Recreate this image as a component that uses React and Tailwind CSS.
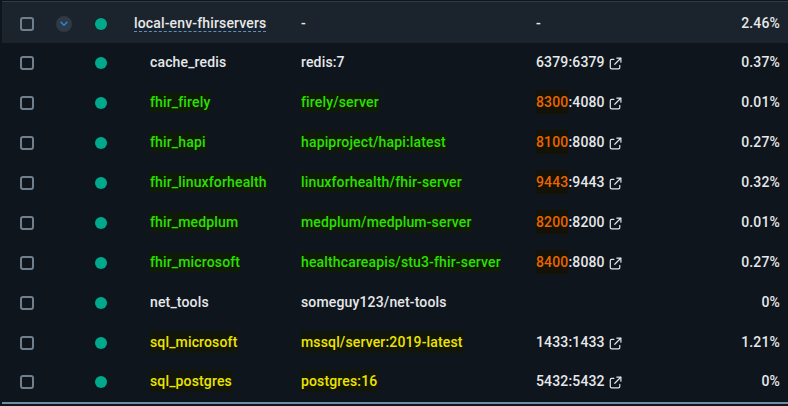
import React from "react";

const G = "text-[#2ae000]";
const Y = "text-[#ece400]";
const GH = "bg-[#0f1a08] py-[2px]";
const YH = "bg-[#12150a] py-[3px]";

const rows = [
  { name: "cache_redis", image: "redis:7", a: "6379", b: "6379", cpu: "0.37%" },
  { name: "fhir_firely", image: "firely/server", a: "8300", b: "4080", cpu: "0.01%", c: "g", hot: true },
  { name: "fhir_hapi", image: "hapiproject/hapi:latest", a: "8100", b: "8080", cpu: "0.27%", c: "g", hot: true },
  { name: "fhir_linuxforhealth", image: "linuxforhealth/fhir-server", a: "9443", b: "9443", cpu: "0.32%", c: "g", hot: true },
  { name: "fhir_medplum", image: "medplum/medplum-server", a: "8200", b: "8200", cpu: "0.01%", c: "g", hot: true },
  { name: "fhir_microsoft", image: "healthcareapis/stu3-fhir-server", a: "8400", b: "8080", cpu: "0.27%", c: "g", hot: true },
  { name: "net_tools", image: "someguy123/net-tools", cpu: "0%" },
  { name: "sql_microsoft", image: "mssql/server:2019-latest", a: "1433", b: "1433", cpu: "1.21%", c: "y" },
  { name: "sql_postgres", image: "postgres:16", a: "5432", b: "5432", cpu: "0%", c: "y", last: true },
];

function Check() {
  return <span className="block w-[14px] h-[14px] rounded-[3px] border-2 border-[#6f7f8e] ml-[20px] mt-[2px] shrink-0" />;
}

function Dot() {
  return <span className="block w-[12px] h-[12px] rounded-full bg-[#00a88c] mt-[2px]" />;
}

function External() {
  return (
    <svg width="13" height="13" viewBox="0 0 14 14" fill="none" stroke="#e4e6e9" strokeWidth="1.3" strokeLinecap="round" strokeLinejoin="round" className="ml-[4px] mt-[2px] shrink-0">
      <path d="M5.2 2.6H2.8A1.4 1.4 0 0 0 1.4 4v7.4a1.4 1.4 0 0 0 1.4 1.4h7.4a1.4 1.4 0 0 0 1.4-1.4V9" />
      <path d="M8.4 1.2h4.4v4.4" />
      <path d="M12.6 1.4 6.2 7.8" />
    </svg>
  );
}

function Tinted({ c, children }) {
  if (!c) return <span className="text-[#e6e8ea]">{children}</span>;
  return <span className={c === "g" ? `${G} ${GH}` : `${Y} ${YH}`}>{children}</span>;
}

function Row({ r }) {
  return (
    <div className={r.last ? "flex items-center h-10 pb-[2px]" : "flex items-center h-10"}>
      <div className="w-[52px] flex items-center"><Check /></div>
      <div className="w-[24px]" />
      <div className="w-[74px] flex items-center pl-[19px]"><Dot /></div>
      <div className="w-[151px] whitespace-nowrap"><Tinted c={r.c}>{r.name}</Tinted></div>
      <div className="w-[235px] whitespace-nowrap"><Tinted c={r.c}>{r.image}</Tinted></div>
      <div className="w-[160px] flex items-center whitespace-nowrap text-[#e6e8ea]">
        {r.a && (
          <>
            <span className={r.hot ? "text-[#e86600] bg-[#141206] py-[2px]" : ""}>{r.a}</span>
            <span>:{r.b}</span>
            <External />
          </>
        )}
      </div>
      <div className="flex-1 text-right pr-2 text-[#e6e8ea]">{r.cpu}</div>
    </div>
  );
}

export default function App() {
  return (
    <div className="w-[788px] h-[406px] overflow-hidden bg-[#0f151d] text-[14px] leading-5 font-medium tracking-[0.15px] font-['Roboto',sans-serif]">
      <div className="pt-[1px]">
        <div className="ml-[2px] h-[1px] bg-[#2c3b47]" />
        <div className="ml-[2px] flex items-center h-[41px] bg-[#1b242c]">
          <div className="w-[50px] flex items-center -ml-[2px]"><Check /></div>
          <div className="w-[24px] flex items-center ml-[6px]">
            <span className="w-4 h-4 rounded-full bg-[#2f3a45] flex items-center justify-center mt-[2px]">
              <svg width="8" height="6" viewBox="0 0 8 6" fill="none" stroke="#2f7fe8" strokeWidth="1.5" strokeLinecap="round" strokeLinejoin="round">
                <path d="M1 1.2 4 4.2 7 1.2" />
              </svg>
            </span>
          </div>
          <div className="w-[54px] flex items-center pl-[15px]"><Dot /></div>
          <div className="w-[167px] whitespace-nowrap text-[#e6e8ea]">
            <span className="border-b border-dashed border-[#5b8fc7] leading-[16px] inline-block">local-env-fhirservers</span>
          </div>
          <div className="w-[235px] text-[#e6e8ea]">-</div>
          <div className="w-[160px] text-[#e6e8ea]">-</div>
          <div className="flex-1 text-right pr-2 text-[#e6e8ea]">2.46%</div>
        </div>
        <div className="-mt-px">
          {rows.map((r) => <Row key={r.name} r={r} />)}
        </div>
        <div className="ml-[2px] h-[2px] bg-[#6f8ea3]" />
      </div>
    </div>
  );
}
